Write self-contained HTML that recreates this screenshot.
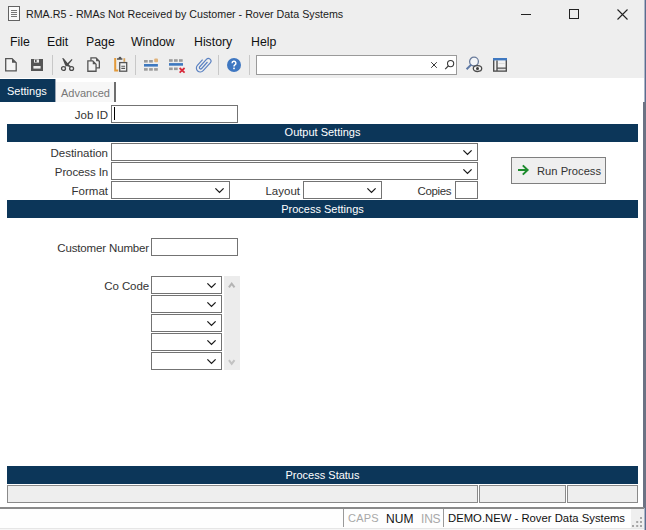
<!DOCTYPE html>
<html><head><meta charset="utf-8">
<style>
*{box-sizing:border-box;margin:0;padding:0}
html,body{width:646px;height:530px;overflow:hidden;background:#fff;font-family:"Liberation Sans",sans-serif;color:#000}
.a{position:absolute}
#top{left:0;top:0;width:646px;height:78px;background:#eeeeee}
.title{left:26px;top:8px;font-size:10.7px;color:#1a1a1a;white-space:nowrap}
.menu{top:34.5px;font-size:12.3px;color:#111}
.sep{width:1px;height:20px;top:55px;background:#c8c8c8}
.lbl{font-size:11.5px;color:#333;text-align:right;white-space:nowrap}
.box{background:#fff;border:1px solid #737373}
.bar{background:#0c3659;color:#fff;font-size:11px;text-align:center;height:18px;line-height:17px}
.dd{position:absolute;right:4px;top:5px;width:11px;height:7px}
</style></head><body>
<div class="a" id="top"></div>
<!-- title bar -->
<svg class="a" style="left:7px;top:6px" width="14" height="16" viewBox="0 0 14 16"><rect x="1.5" y="0.5" width="11" height="14" fill="#fafafa" stroke="#626262"/><path d="M4 4.5h6M4 6.5h6M4 8.5h6M4 10.5h6" stroke="#777" stroke-width="1"/></svg>
<div class="a title">RMA.R5 - RMAs Not Received by Customer - Rover Data Systems</div>
<div class="a" style="left:521px;top:14px;width:10px;height:1px;background:#222"></div>
<div class="a" style="left:569px;top:9px;width:10px;height:10px;border:1px solid #222"></div>
<svg class="a" style="left:617px;top:9px" width="11" height="11" viewBox="0 0 11 11"><path d="M0.5 0.5L10.5 10.5M10.5 0.5L0.5 10.5" stroke="#222" stroke-width="1.1"/></svg>
<div class="a" style="left:644px;top:0;width:1px;height:530px;background:#aab5c8"></div><div class="a" style="left:645px;top:0;width:1px;height:530px;background:#5b6c8d"></div>
<!-- menu -->
<div class="a menu" style="left:10px">File</div>
<div class="a menu" style="left:47px">Edit</div>
<div class="a menu" style="left:86px">Page</div>
<div class="a menu" style="left:131px">Window</div>
<div class="a menu" style="left:194px">History</div>
<div class="a menu" style="left:251px">Help</div>
<!-- toolbar -->
<svg class="a" style="left:4px;top:57px" width="14" height="16" viewBox="0 0 14 16"><path d="M1.7 1.6h6.3l4.2 4.2v8h-10.5z" fill="#f4f4f4" stroke="#555" stroke-width="1.3"/><path d="M8 1.6v4.2h4.2z" fill="#555"/></svg>
<svg class="a" style="left:30px;top:58px" width="14" height="14" viewBox="0 0 14 14"><path d="M1 1h12v12h-12z" fill="#555"/><rect x="4" y="1.4" width="5" height="3.2" fill="#eee"/><rect x="5" y="1.8" width="1.6" height="2.4" fill="#555"/><rect x="3.4" y="8" width="7.2" height="2.6" fill="#eee"/></svg>
<div class="a sep" style="left:52px"></div>
<svg class="a" style="left:56px;top:54px" width="24" height="22" viewBox="0 0 24 22"><path d="M15.7 5L16.5 5.7L11.8 11.6L8.8 13L10.6 10.2z" fill="#4a4a4a"/><path d="M6.2 4L7.6 4.2L13.2 11L15.2 12.4L13.6 13L9.2 11.4z" fill="#4a4a4a"/><circle cx="7.5" cy="14.5" r="1.95" fill="none" stroke="#4a4a4a" stroke-width="1.3"/><circle cx="15.6" cy="14.5" r="1.95" fill="none" stroke="#4a4a4a" stroke-width="1.3"/></svg>
<svg class="a" style="left:86px;top:56px" width="15" height="17" viewBox="0 0 15 17"><path d="M4.95 1.95h5.1l3.3 3.3v6.6h-8.4z" fill="#f2f2f2" stroke="#555" stroke-width="1.3"/><path d="M10.05 1.95v3.3h3.3z" fill="#555"/><path d="M1.85 4.85h4.9l3.3 3.3v7.1h-8.2z" fill="#f2f2f2" stroke="#555" stroke-width="1.3"/><path d="M6.75 4.85v3.3h3.3z" fill="#555"/></svg>
<svg class="a" style="left:113px;top:56px" width="15" height="17" viewBox="0 0 15 17"><path d="M2.2 2v12.6h3" fill="none" stroke="#e39a3a" stroke-width="2"/><path d="M4 2.2h1.6a1.4 1.4 0 0 1 2.8 0h1v1.6h-5.4z" fill="#555"/><rect x="10.4" y="2.2" width="1.8" height="3.6" fill="#d9a25a"/><rect x="6.7" y="6.6" width="7" height="8.6" fill="#f4f4f4" stroke="#555" stroke-width="1.3"/><path d="M8.3 10.2h3.8M8.3 12.4h3.8" stroke="#555" stroke-width="1.1"/></svg>
<div class="a sep" style="left:135px"></div>
<svg class="a" style="left:143px;top:57px" width="17" height="15" viewBox="0 0 17 15"><g fill="#9b9b9b"><rect x="1" y="3" width="3.7" height="2.6"/><rect x="6.1" y="3" width="3.7" height="2.6"/><rect x="1" y="11.1" width="3.7" height="2.6"/><rect x="6.1" y="11.1" width="3.7" height="2.6"/><rect x="11.1" y="11.1" width="3.7" height="2.6"/></g><rect x="11.2" y="1.4" width="3.8" height="3.8" rx="1" fill="#e0b27a"/><rect x="1" y="7" width="13.9" height="2.6" fill="#3e78bf"/></svg>
<svg class="a" style="left:168px;top:57px" width="19" height="17" viewBox="0 0 19 17"><g fill="#9b9b9b"><rect x="1" y="2.2" width="3.7" height="2.6"/><rect x="6" y="2.2" width="3.7" height="2.6"/><rect x="11" y="2.2" width="3.7" height="2.6"/><rect x="1" y="10.5" width="3.7" height="2.6"/><rect x="6" y="10.5" width="3.7" height="2.6"/></g><rect x="1" y="6.1" width="14" height="2.6" fill="#3e78bf"/><path d="M11.6 11L16.6 15.6M16.6 11L11.6 15.6" stroke="#d8283a" stroke-width="1.7"/></svg>
<svg class="a" style="left:195px;top:56px" width="17" height="17" viewBox="0 0 17 17"><g transform="translate(8.5 8.5) rotate(42) translate(-3 -9)"><path d="M4.3 4.5V13.2A1.3 1.3 0 0 1 1.7 13.2V3.2A2.6 2.6 0 0 1 6.9 3.2V13.8A3.9 3.9 0 0 1 -0.9 13.8V6" fill="none" stroke="#5b82c2" stroke-width="1.2"/></g></svg>
<div class="a sep" style="left:218px"></div>
<svg class="a" style="left:227px;top:58px" width="14" height="14" viewBox="0 0 14 14"><circle cx="7" cy="7" r="7" fill="#3f77c1"/><path d="M5.1 5.2A1.9 1.9 0 1 1 7.9 6.9C7.2 7.4 7 7.8 7 8.6" fill="none" stroke="#fff" stroke-width="1.5"/><rect x="6.2" y="9.6" width="1.6" height="1.6" fill="#fff"/></svg>
<div class="a sep" style="left:249px"></div>
<div class="a box" style="left:256px;top:55px;width:201px;height:20px;border-color:#9a9a9a"></div>
<svg class="a" style="left:430px;top:61px" width="8" height="8" viewBox="0 0 8 8"><path d="M1.2 1.2L6.8 6.8M6.8 1.2L1.2 6.8" stroke="#3a3a3a" stroke-width="1"/></svg>
<svg class="a" style="left:444px;top:59px" width="12" height="12" viewBox="0 0 12 12"><circle cx="6.6" cy="4.6" r="3.1" fill="none" stroke="#3a3a3a" stroke-width="1.1"/><path d="M4.4 6.9L1.2 10.1" stroke="#3a3a3a" stroke-width="1.3"/></svg>
<svg class="a" style="left:465px;top:56px" width="18" height="17" viewBox="0 0 18 17"><circle cx="9" cy="5.6" r="4.4" fill="#f3f5f8" stroke="#6a7c9c" stroke-width="1.3"/><path d="M6.2 8.6L1.6 13.2" stroke="#5c78a6" stroke-width="2"/><ellipse cx="12.5" cy="12.6" rx="4.2" ry="2.9" fill="#f6f6f6" stroke="#4a4a4a" stroke-width="1.3"/><circle cx="12.5" cy="12.6" r="1.5" fill="#3c3c3c"/></svg>
<svg class="a" style="left:493px;top:57px" width="15" height="16" viewBox="0 0 15 16"><rect x="0.7" y="1.7" width="12.6" height="12.4" fill="#f2f2f2" stroke="#505050" stroke-width="1.4"/><rect x="0" y="1" width="14" height="2.4" fill="#3f78c0"/><path d="M4 3.4v10.7M4 11.1h9.3" stroke="#505050" stroke-width="1.4"/><path d="M5.5 6.5h6M5.5 12.6h6" stroke="#d6d6d6" stroke-width="0.8"/></svg>
<!-- tabs -->
<div class="a" style="left:0;top:79px;width:55px;height:23px;background:#0c3659"></div>
<div class="a" style="left:7px;top:85px;font-size:11px;color:#fff">Settings</div>
<div class="a" style="left:55px;top:79px;width:1px;height:23px;background:#9aa6b6"></div><div class="a" style="left:56px;top:82px;width:58px;height:20px;background:#f7f7f7"></div>
<div class="a" style="left:114px;top:82px;width:2px;height:20px;background:#6e6e6e"></div>
<div class="a" style="left:61px;top:87px;font-size:11px;color:#777">Advanced</div>
<!-- right border bar -->
<div class="a" style="left:643px;top:102px;width:3px;height:406px;background:#6c7384"></div>
<!-- job id -->
<div class="a lbl" style="right:538px;top:109px">Job ID</div>
<div class="a box" style="left:111px;top:105px;width:127px;height:18px"></div>
<div class="a" style="left:114px;top:107px;width:1px;height:13px;background:#000"></div>
<div class="a bar" style="left:7px;top:124px;width:631px">Output Settings</div>
<!-- output settings -->
<div class="a lbl" style="right:538px;top:147px">Destination</div>
<div class="a box" style="left:111px;top:143px;width:367px;height:18px"><svg class="dd" viewBox="0 0 11 7"><path d="M1.4 1.4L5.5 5.4L9.6 1.4" fill="none" stroke="#1a1a1a" stroke-width="1.3"/></svg></div>
<div class="a lbl" style="right:538px;top:166px;letter-spacing:-0.12px">Process In</div>
<div class="a box" style="left:111px;top:162px;width:367px;height:18px"><svg class="dd" viewBox="0 0 11 7"><path d="M1.4 1.4L5.5 5.4L9.6 1.4" fill="none" stroke="#1a1a1a" stroke-width="1.3"/></svg></div>
<div class="a lbl" style="right:538px;top:185px">Format</div>
<div class="a box" style="left:111px;top:181px;width:119px;height:18px"><svg class="dd" viewBox="0 0 11 7"><path d="M1.4 1.4L5.5 5.4L9.6 1.4" fill="none" stroke="#1a1a1a" stroke-width="1.3"/></svg></div>
<div class="a lbl" style="right:346px;top:185px">Layout</div>
<div class="a box" style="left:303px;top:181px;width:79px;height:18px"><svg class="dd" viewBox="0 0 11 7"><path d="M1.4 1.4L5.5 5.4L9.6 1.4" fill="none" stroke="#1a1a1a" stroke-width="1.3"/></svg></div>
<div class="a lbl" style="right:195px;top:185px;letter-spacing:-0.4px">Copies</div>
<div class="a box" style="left:455px;top:181px;width:23px;height:18px"></div>
<div class="a" style="left:511px;top:157px;width:95px;height:27px;background:#efefef;border:1px solid #7f7f7f"></div>
<svg class="a" style="left:517px;top:164px" width="14" height="12" viewBox="0 0 14 12"><path d="M1 6H11.2M5.8 1.4L10.6 6L5.8 10.6" fill="none" stroke="#1d8b2d" stroke-width="2"/></svg>
<div class="a" style="left:537px;top:165px;font-size:11.2px;color:#333">Run Process</div>
<div class="a bar" style="left:7px;top:200px;width:631px;height:18px;line-height:18px">Process Settings</div>
<!-- process settings -->
<div class="a lbl" style="right:497px;top:242px;letter-spacing:-0.15px">Customer Number</div>
<div class="a box" style="left:151px;top:238px;width:87px;height:18px"></div>
<div class="a lbl" style="right:497px;top:280px;letter-spacing:-0.1px">Co Code</div>
<div class="a" style="left:224px;top:276px;width:16px;height:94px;background:#ececec"></div>
<svg class="a" style="left:228px;top:281px" width="8" height="8" viewBox="0 0 8 8"><path d="M0.9 6.3L3.7 2.6L6.5 6.3" fill="none" stroke="#b4b4b4" stroke-width="2"/></svg>
<svg class="a" style="left:228px;top:358px" width="8" height="8" viewBox="0 0 8 8"><path d="M0.9 2.2L3.7 5.9L6.5 2.2" fill="none" stroke="#c2c2c2" stroke-width="2"/></svg>
<div class="a box" style="left:151px;top:276px;width:71px;height:18px"><svg class="dd" viewBox="0 0 11 7"><path d="M1.4 1.4L5.5 5.4L9.6 1.4" fill="none" stroke="#1a1a1a" stroke-width="1.3"/></svg></div>
<div class="a box" style="left:151px;top:295px;width:71px;height:18px"><svg class="dd" viewBox="0 0 11 7"><path d="M1.4 1.4L5.5 5.4L9.6 1.4" fill="none" stroke="#1a1a1a" stroke-width="1.3"/></svg></div>
<div class="a box" style="left:151px;top:314px;width:71px;height:18px"><svg class="dd" viewBox="0 0 11 7"><path d="M1.4 1.4L5.5 5.4L9.6 1.4" fill="none" stroke="#1a1a1a" stroke-width="1.3"/></svg></div>
<div class="a box" style="left:151px;top:333px;width:71px;height:18px"><svg class="dd" viewBox="0 0 11 7"><path d="M1.4 1.4L5.5 5.4L9.6 1.4" fill="none" stroke="#1a1a1a" stroke-width="1.3"/></svg></div>
<div class="a box" style="left:151px;top:352px;width:71px;height:18px"><svg class="dd" viewBox="0 0 11 7"><path d="M1.4 1.4L5.5 5.4L9.6 1.4" fill="none" stroke="#1a1a1a" stroke-width="1.3"/></svg></div>

<!-- status -->
<div class="a bar" style="left:7px;top:466px;width:631px;height:18px;line-height:18px">Process Status</div>
<div class="a" style="left:7px;top:485px;width:471px;height:18px;background:#eeeeee;border:1px solid #8a8a8a"></div>
<div class="a" style="left:479px;top:485px;width:87px;height:18px;background:#eeeeee;border:1px solid #8a8a8a"></div>
<div class="a" style="left:567px;top:485px;width:71px;height:18px;background:#eeeeee;border:1px solid #8a8a8a"></div>
<!-- status bar -->
<div class="a" style="left:0;top:507px;width:644px;height:23px;background:#fefefe;border-top:2px solid #8a8a8a"></div>
<div class="a" style="left:0;top:528px;width:644px;height:1px;background:#e6e6e6"></div><div class="a" style="left:0;top:529px;width:644px;height:1px;background:#f6f6f6"></div>
<div class="a" style="left:631px;top:509px;width:13px;height:19px;background:#efefef"></div>
<div class="a" style="left:343px;top:509px;width:1px;height:18px;background:#9a9a9a"></div>
<div class="a" style="left:443px;top:509px;width:1px;height:18px;background:#9a9a9a"></div>
<div class="a" style="left:348px;top:512px;font-size:11px;color:#a8a8a8;letter-spacing:0.2px">CAPS</div>
<div class="a" style="left:386px;top:512px;font-size:12px;color:#111;letter-spacing:0.1px">NUM</div>
<div class="a" style="left:421px;top:512px;font-size:12px;color:#a8a8a8;letter-spacing:-0.2px">INS</div>
<div class="a" style="left:448px;top:512px;font-size:11.3px;color:#111">DEMO.NEW - Rover Data Systems</div>
<svg class="a" style="left:631px;top:516px" width="13" height="12" viewBox="0 0 13 12"><g fill="#a6a6a6"><rect x="9" y="1" width="2" height="2"/><rect x="5.2" y="5" width="2" height="2"/><rect x="9" y="5" width="2" height="2"/><rect x="1" y="9" width="2" height="2"/><rect x="5.2" y="9" width="2" height="2"/><rect x="9" y="9" width="2" height="2"/></g></svg>
</body></html>
